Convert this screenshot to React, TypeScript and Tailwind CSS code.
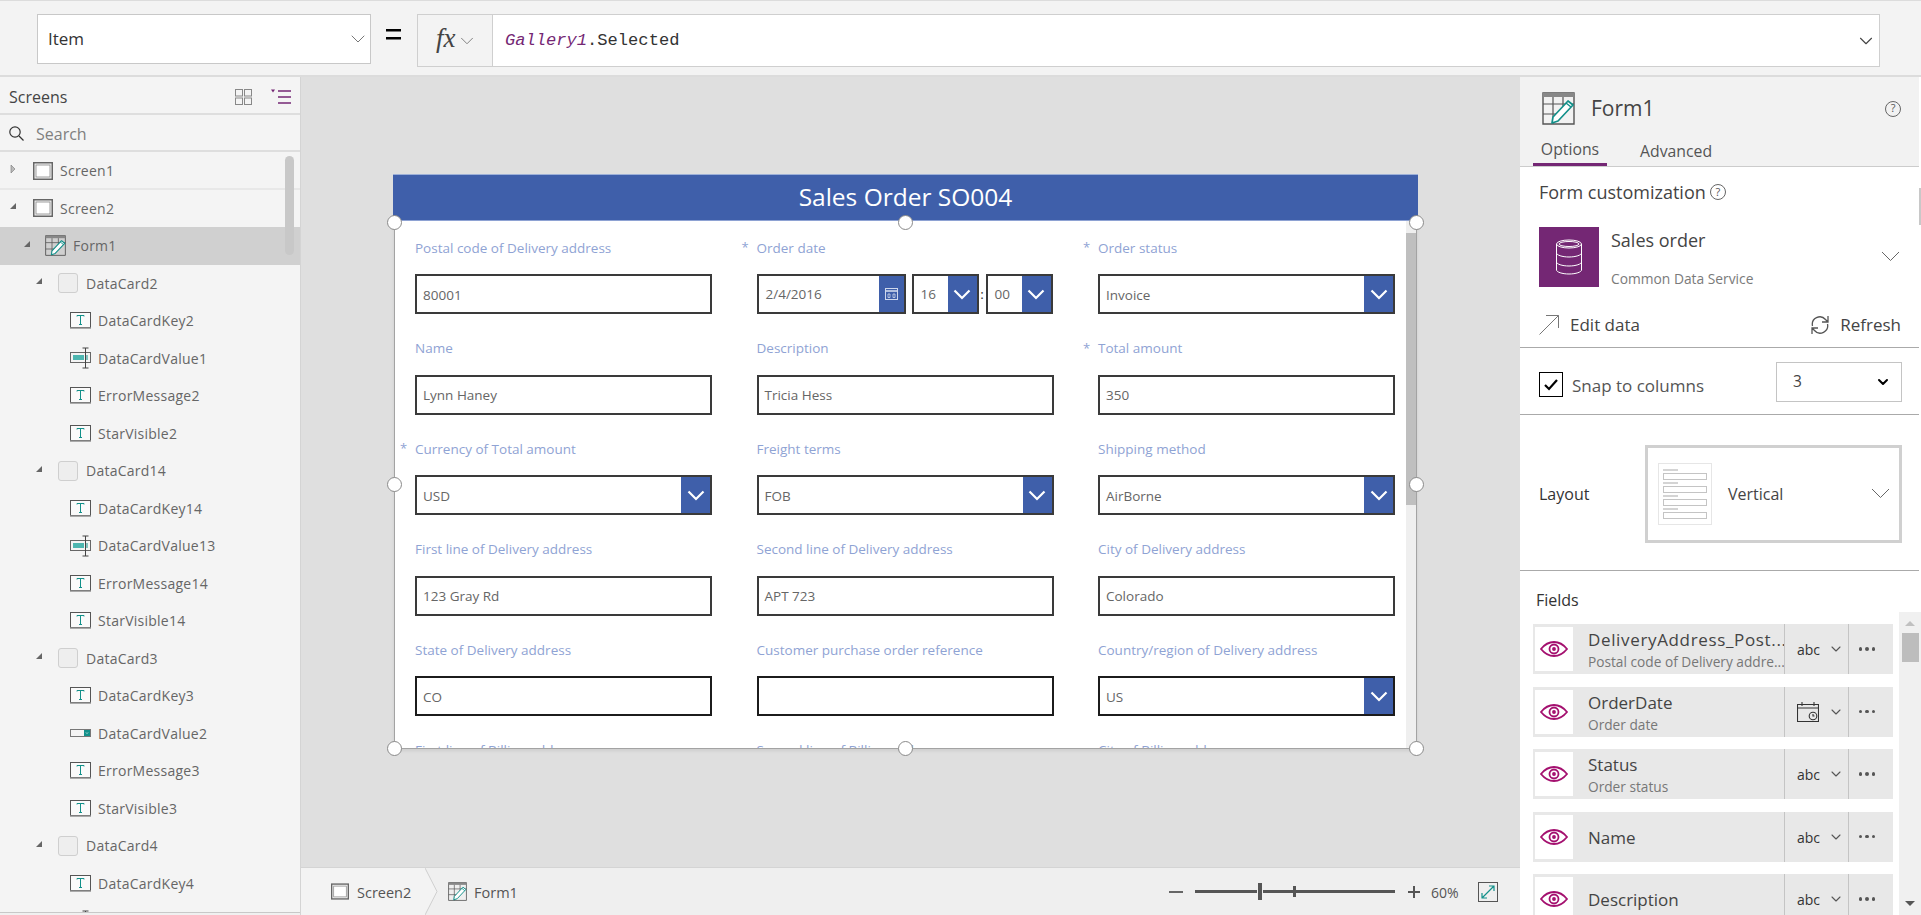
import { ChevronDown } from "lucide-react";

const sans = "font-['Open_Sans','Noto_Sans',sans-serif]";

type TreeKind = "screen" | "form" | "card" | "text" | "input" | "select";
type TreeItem = { name: string; kind: TreeKind; open?: boolean; selected?: boolean };

const tree: TreeItem[] = [
  { name: "Screen1", kind: "screen", open: false },
  { name: "Screen2", kind: "screen", open: true },
  { name: "Form1", kind: "form", open: true, selected: true },
  { name: "DataCard2", kind: "card", open: true },
  { name: "DataCardKey2", kind: "text" },
  { name: "DataCardValue1", kind: "input" },
  { name: "ErrorMessage2", kind: "text" },
  { name: "StarVisible2", kind: "text" },
  { name: "DataCard14", kind: "card", open: true },
  { name: "DataCardKey14", kind: "text" },
  { name: "DataCardValue13", kind: "input" },
  { name: "ErrorMessage14", kind: "text" },
  { name: "StarVisible14", kind: "text" },
  { name: "DataCard3", kind: "card", open: true },
  { name: "DataCardKey3", kind: "text" },
  { name: "DataCardValue2", kind: "select" },
  { name: "ErrorMessage3", kind: "text" },
  { name: "StarVisible3", kind: "text" },
  { name: "DataCard4", kind: "card", open: true },
  { name: "DataCardKey4", kind: "text" },
  { name: "DataCardValue3", kind: "input" },
];

type FieldCell = { label: string; value?: string; star?: boolean; type?: "text" | "select" | "date"; dark?: boolean };

const cells: FieldCell[] = [
  { label: "Postal code of Delivery address", value: "80001" },
  { label: "Order date", star: true, type: "date" },
  { label: "Order status", value: "Invoice", star: true, type: "select" },
  { label: "Name", value: "Lynn Haney" },
  { label: "Description", value: "Tricia Hess" },
  { label: "Total amount", value: "350", star: true },
  { label: "Currency of Total amount", value: "USD", star: true, type: "select" },
  { label: "Freight terms", value: "FOB", type: "select" },
  { label: "Shipping method", value: "AirBorne", type: "select" },
  { label: "First line of Delivery address", value: "123 Gray Rd" },
  { label: "Second line of Delivery address", value: "APT 723" },
  { label: "City of Delivery address", value: "Colorado" },
  { label: "State of Delivery address", value: "CO", dark: true },
  { label: "Customer purchase order reference", value: "", dark: true },
  { label: "Country/region of Delivery address", value: "US", type: "select", dark: true },
  { label: "First line of Billing address", value: "" },
  { label: "Second line of Billing address", value: "" },
  { label: "City of Billing address", value: "" },
];

const fields = [
  { name: "DeliveryAddress_Post...", sub: "Postal code of Delivery addre...", wide: true },
  { name: "OrderDate", sub: "Order date", date: true },
  { name: "Status", sub: "Order status" },
  { name: "Name" },
  { name: "Description" },
];

function FormEditIcon({ className }: { className: string }) {
  return (
    <svg viewBox="0 0 33 33" className={className} fill="none">
      <path d="M1 1h31v31H1z" stroke="#555" strokeWidth="1.4" />
      <path d="M1 1h31v4H1z" fill="#888" />
      <path d="M1 12h31M1 22h16M11 5v27M21 5v12" stroke="#555" strokeWidth="1.2" />
      <path d="M11 25 L26 9 L31 13 L16 29 L10 31 Z" fill="#fff" stroke="#12908a" strokeWidth="1.7" strokeLinejoin="round" />
      <path d="M24 11l5 4" stroke="#12908a" strokeWidth="1.4" />
    </svg>
  );
}

function ScreenIcon({ className }: { className: string }) {
  return (
    <svg viewBox="0 0 20 18" className={className} fill="none">
      <rect x="0.75" y="0.75" width="18.5" height="16.5" stroke="#666" strokeWidth="1.5" />
      <rect x="3" y="3" width="14" height="12" fill="#fff" stroke="#888" strokeWidth="0.8" />
    </svg>
  );
}

function TextIcon() {
  return (
    <svg viewBox="0 0 21 17" className="w-[21px] h-[17px]" fill="none">
      <rect x="0.5" y="0.5" width="20" height="15" fill="#fafafa" stroke="#555" />
      <path d="M0 16.25h21" stroke="#aaa" strokeWidth="1.5" />
      <path d="M7 4.5V3.5h7v1M10.5 3.5v9M9 12.5h3" stroke="#12908a" strokeWidth="1" />
    </svg>
  );
}

function InputIcon() {
  return (
    <svg viewBox="0 0 21 22" className="w-[21px] h-[22px]" fill="none">
      <rect x="0.5" y="5.5" width="20" height="10" fill="#f4f4f4" stroke="#666" />
      <rect x="3" y="8" width="11" height="5" fill="#4db6b0" />
      <path d="M17 8v5" stroke="#12908a" />
      <path d="M12.5 1h6M15.5 1v20M12.5 21h6" stroke="#444" />
    </svg>
  );
}

function SelectIcon() {
  return (
    <svg viewBox="0 0 21 8" className="w-[21px] h-[8px]" fill="none">
      <rect x="0.5" y="0.5" width="20" height="7" fill="#f4f4f4" stroke="#777" />
      <rect x="14" y="1" width="6" height="6" fill="#12908a" />
      <path d="M16 3.5l1 1 1-1" stroke="#fff" strokeWidth="0.7" />
    </svg>
  );
}

function Caret({ open }: { open?: boolean }) {
  if (open) {
    return (
      <svg viewBox="0 0 8 8" className="w-2 h-2 -mt-1">
        <path d="M7 1v6H1z" fill="#666" />
      </svg>
    );
  }
  return (
    <svg viewBox="0 0 8 10" className="w-2 h-[10px] -mt-1">
      <path d="M2 1l4 4-4 4z" fill="#bbb" stroke="#777" strokeWidth="0.6" />
    </svg>
  );
}

function TreeRow({ item }: { item: TreeItem }) {
  const isLeaf = item.kind === "text" || item.kind === "input" || item.kind === "select";
  const pad = isLeaf ? "pl-[70px]" : item.kind === "card" ? "pl-[35px]" : item.kind === "form" ? "pl-[23px]" : "pl-[9px]";
  return (
    <div className={`flex items-center h-[37.5px] shrink-0 ${pad} ${item.selected ? "bg-[#d0d0d0]" : ""}`}>
      {!isLeaf && (
        <span className={`flex items-center ${item.kind === "screen" ? "w-6" : item.kind === "form" ? "w-[22px]" : "w-[23px]"}`}>
          <Caret open={item.open} />
        </span>
      )}
      <span className={`flex items-center ${item.kind === "screen" ? "w-[27px]" : "w-[28px]"}`}>
        {item.kind === "screen" && <ScreenIcon className="w-5 h-[18px]" />}
        {item.kind === "form" && <FormEditIcon className="w-[21px] h-[21px]" />}
        {item.kind === "card" && <span className="w-[20px] h-[20px] rounded-[3px] bg-[#eeeeee] border border-[#cfcfcf]" />}
        {item.kind === "text" && <TextIcon />}
        {item.kind === "input" && <InputIcon />}
        {item.kind === "select" && <SelectIcon />}
      </span>
      <span className="text-[14px] text-[#666666] tracking-[0.25px]">{item.name}</span>
    </div>
  );
}

function Sidebar() {
  return (
    <aside className="relative w-[300px] shrink-0 bg-[#f4f4f4] flex flex-col overflow-hidden">
      <div className="flex items-center h-[38px] shrink-0 pl-[9px] pt-[3px] border-b-2 border-[#dedede]">
        <span className="text-[16px] text-[#444444]">Screens</span>
        <svg viewBox="0 0 17 16" className="w-[17px] h-4 ml-auto" fill="none" stroke="#888">
          <rect x="0.5" y="0.5" width="7" height="6.5" />
          <rect x="9.5" y="0.5" width="7" height="6.5" />
          <rect x="0.5" y="9" width="7" height="6.5" />
          <rect x="9.5" y="9" width="7" height="6.5" />
        </svg>
        <svg viewBox="0 0 20 15" className="w-5 h-[15px] ml-[19px] mr-[9px]" fill="none" stroke="#742774" strokeWidth="1.4">
          <path d="M7 2h13M7 8h13M7 14h13" />
          <path d="M0 0.5h4L2 3.5z" fill="#742774" stroke="none" />
        </svg>
      </div>
      <div className="flex items-center h-[37px] shrink-0 pl-[9px] pt-[2px] border-b-2 border-[#dedede]">
        <svg viewBox="0 0 15 15" className="w-[15px] h-[15px] mr-3" fill="none" stroke="#333" strokeWidth="1.2">
          <circle cx="6" cy="6" r="5.2" />
          <path d="M10 10l4.5 4.5" />
        </svg>
        <span className="text-[16px] text-[#808080]">Search</span>
      </div>
      <div className="flex flex-col flex-1 min-h-0 overflow-hidden">
        {tree.map((item, i) => (
          <div key={item.name} className={i === 1 ? "border-t-2 border-[#e8e8e8] -mt-[2px]" : ""}>
            <TreeRow item={item} />
          </div>
        ))}
      </div>
      <div className="absolute left-[285px] top-[79px] w-[9px] h-[99px] rounded-[5px] bg-[#c8c8c8]" />
      <div className="absolute left-0 right-0 bottom-0 h-[3px] bg-[#f0f0f0] border-t border-[#c8c8c8]" />
    </aside>
  );
}

function BlueChevron({ className }: { className: string }) {
  return (
    <span className={`flex items-center justify-center bg-[#3f5faa] ${className}`}>
      <svg viewBox="0 0 18 11" className="w-[18px] h-[11px]" fill="none" stroke="#fff" strokeWidth="2.2">
        <path d="M1.5 1.5L9 9l7.5-7.5" />
      </svg>
    </span>
  );
}

function DateField() {
  return (
    <div className="flex items-center h-10 text-[13.5px] text-[#666666]">
      <div className="flex w-[149px] h-full border-2 border-[#3a3a3a]">
        <span className="flex-1 flex items-center pl-[7px]">2/4/2016</span>
        <span className="w-[25px] flex items-center justify-center bg-[#3f5faa]">
          <svg viewBox="0 0 13 12" className="w-[13px] h-3" fill="none" stroke="#cfd8ec">
            <rect x="0.5" y="0.5" width="12" height="11" />
            <path d="M0.5 3h12" strokeWidth="1.6" />
            <path d="M3 6h2v3.5H3zM8 6h2v3.5H8z" strokeWidth="0.8" />
          </svg>
        </span>
      </div>
      <div className="flex w-[67px] h-full ml-[6px] border-2 border-[#3a3a3a]">
        <span className="flex-1 flex items-center pl-[7px]">16</span>
        <BlueChevron className="w-[29px]" />
      </div>
      <span className="w-[7px] text-center text-[#333333]">:</span>
      <div className="flex w-[67px] h-full border-2 border-[#3a3a3a]">
        <span className="flex-1 flex items-center pl-[7px]">00</span>
        <BlueChevron className="w-[29px]" />
      </div>
    </div>
  );
}

function FormCell({ cell }: { cell: FieldCell }) {
  const border = cell.dark ? "border-[#1c1c1c]" : "border-[#3a3a3a]";
  return (
    <div className="pt-3 h-[100.5px]">
      <div className="relative h-5 mb-4 flex items-center text-[13.5px] text-[#8fa3d4]">
        {cell.star && <span className="absolute -left-[15px] top-0 text-[13px]">*</span>}
        {cell.label}
      </div>
      {cell.type === "date" ? (
        <DateField />
      ) : (
        <div className={`flex h-10 border-2 ${border} bg-white text-[13.5px] text-[#666666]`}>
          <span className={`flex-1 flex items-center pl-[6px] ${cell.type === "select" ? "pt-[3px]" : "pt-[2px]"}`}>{cell.value}</span>
          {cell.type === "select" && <BlueChevron className="w-[29px]" />}
        </div>
      )}
    </div>
  );
}

function Handle({ className }: { className: string }) {
  return <span className={`absolute w-[15px] h-[15px] rounded-full bg-white border border-[#8a8a8a] ${className}`} />;
}

function FormCanvas() {
  return (
    <div className="flex-1 min-h-0 bg-[#dfdfdf] pt-[97px] pl-[92px]">
      <div className="relative w-[1025px]">
        <div className="h-[47px] flex items-center justify-center bg-[#3f5faa] border-t border-[#9db0d8] border-b border-b-[#8fa3d4] text-[24.5px] text-white">
          Sales Order SO004
        </div>
        <div className="flex h-[528px] mx-px bg-white border-x border-b border-[#a3a3a3] overflow-hidden shadow-[0_2px_3px_rgba(0,0,0,0.08)]">
          <div className="flex-1 pt-[5px] pl-[20px] overflow-hidden">
            <div className="grid grid-cols-[297px_297px_297px] gap-x-[44.5px]">
              {cells.map((cell) => (
                <FormCell key={cell.label} cell={cell} />
              ))}
            </div>
          </div>
          <div className="w-[10px] shrink-0 bg-[#efefef] pt-3">
            <div className="h-[272px] bg-[#bfbfbf]" />
          </div>
        </div>
        <Handle className="-left-[6px] top-[41px]" />
        <Handle className="left-[505px] top-[41px]" />
        <Handle className="-right-[6px] top-[41px]" />
        <Handle className="-left-[6px] top-[303px]" />
        <Handle className="-right-[6px] top-[303px]" />
        <Handle className="-left-[6px] top-[567px]" />
        <Handle className="left-[505px] top-[567px]" />
        <Handle className="-right-[6px] top-[567px]" />
      </div>
    </div>
  );
}

function StatusBar() {
  return (
    <div className="flex items-center h-[48px] shrink-0 bg-[#efefef] border-t border-[#d4d4d4] text-[#555555]">
      <div className="flex items-center h-full">
        <div className="flex items-center h-full w-[124px] pl-[30px] bg-[#f3f3f3]">
          <ScreenIcon className="w-[18px] h-[17px]" />
          <span className="ml-2 pt-[2px] text-[14.5px]">Screen2</span>
        </div>
        <svg viewBox="0 0 13 47" className="w-[13px] h-full" fill="none">
          <path d="M0 0L0 47L12 23.5z" fill="#f3f3f3" />
          <path d="M0 0l12 23.5L0 47" stroke="#cfcfcf" />
        </svg>
        <FormEditIcon className="w-[19px] h-[19px] ml-[10px]" />
        <span className="ml-[7px] pt-[2px] text-[14.5px]">Form1</span>
      </div>
      <div className="flex items-center ml-auto pr-[22px]">
        <span className="w-[14px] h-[2px] bg-[#666666]" />
        <div className="relative w-[200px] h-[3px] ml-3 bg-[#555555]">
          <span className="absolute left-[62px] -top-[7px] w-1 h-[17px] bg-[#555555] border-x border-[#efefef] box-content" />
          <span className="absolute left-[98px] -top-[4px] w-[3px] h-[11px] bg-[#555555]" />
        </div>
        <svg viewBox="0 0 12 12" className="w-3 h-3 ml-[13px]" stroke="#555" strokeWidth="2">
          <path d="M6 0v12M0 6h12" />
        </svg>
        <span className="w-[45px] ml-[11px] mr-[2px] pt-[2px] text-[14px]">60%</span>
        <svg viewBox="0 0 20 20" className="w-5 h-5" fill="none">
          <rect x="0.5" y="0.5" width="19" height="19" stroke="#555" />
          <path d="M4 16L16 4M11 4h5v5M4 11v5h5" stroke="#12908a" strokeWidth="1.2" />
        </svg>
      </div>
    </div>
  );
}

function HelpIcon({ className }: { className: string }) {
  return (
    <span className={`flex items-center justify-center rounded-full border border-[#666666] text-[#555555] ${className}`}>?</span>
  );
}

function Eye() {
  return (
    <svg viewBox="0 0 28 16" className="w-7 h-4" fill="none" stroke="#a4106f" strokeWidth="1.8">
      <path d="M1 8C5 3 9 1 14 1s9 2 13 7c-4 5-8 7-13 7S5 13 1 8z" />
      <circle cx="14" cy="8" r="4.5" />
      <circle cx="14" cy="8" r="1" fill="#a4106f" />
    </svg>
  );
}

function FieldRow({ field }: { field: (typeof fields)[number] }) {
  return (
    <div className="flex h-[50px] shrink-0 bg-[#e8e8e8] mb-[12.5px]">
      <div className="flex items-center justify-center w-[38px] my-[3px] ml-[2px] bg-white">
        <Eye />
      </div>
      <div className="flex flex-col justify-center w-[211px] pl-[15px] pt-[2px] overflow-hidden whitespace-nowrap">
        <div className={`text-[17px] leading-[22px] text-[#444444] ${field.wide ? "tracking-[0.65px]" : ""}`}>{field.name}</div>
        {field.sub && <div className="pt-[2px] text-[13.7px] leading-[18px] text-[#777777]">{field.sub}</div>}
      </div>
      <div className="flex items-center w-[64px] pl-[12px] border-l border-[#c4c4c4]">
        {field.date ? (
          <svg viewBox="0 0 22 21" className="w-[22px] h-[21px]" fill="none" stroke="#333" strokeWidth="1.1">
            <path d="M0.5 3.5h21v17h-21zM0.5 7h21M5 1v4M17 1v4" />
            <circle cx="16" cy="15" r="3.8" fill="#e8e8e8" />
            <path d="M16 13v2h1.5" />
          </svg>
        ) : (
          <span className="w-[22px] pt-px text-[14px] font-medium text-[#333333]">abc</span>
        )}
        <ChevronDown className="w-[16px] h-[16px] ml-[9px] text-[#555555]" strokeWidth={1.6} />
      </div>
      <div className="flex items-center justify-center gap-[3px] w-[44px] pr-[7px] border-l border-[#c4c4c4]">
        <span className="w-[3.5px] h-[3.5px] rounded-full bg-[#555555]" />
        <span className="w-[3.5px] h-[3.5px] rounded-full bg-[#555555]" />
        <span className="w-[3.5px] h-[3.5px] rounded-full bg-[#555555]" />
      </div>
    </div>
  );
}

function RightPanel() {
  return (
    <aside className="relative w-[401px] shrink-0 flex flex-col bg-white overflow-hidden">
      <div className="h-[90px] shrink-0 bg-[#f2f2f2] border-b border-[#cccccc] mr-[2px] relative">
        <div className="flex items-center pt-[15px] pl-[22px]">
          <FormEditIcon className="w-[33px] h-[33px]" />
          <span className="ml-4 text-[21px] text-[#444444]">Form1</span>
          <HelpIcon className="ml-auto mr-[18px] w-4 h-4 text-[11px]" />
        </div>
        <div className="absolute left-[13px] bottom-0 flex">
          <div className="w-[74px] h-[33px] flex items-center justify-center pt-[4px] border-b-[3px] border-[#742774] text-[15.8px] text-[#555555]">Options</div>
          <div className="ml-[33px] h-[33px] flex items-center pt-[5px] text-[15.8px] text-[#555555]">Advanced</div>
        </div>
      </div>
      <div className="h-[181px] shrink-0 mr-[2px] border-b border-[#aaaaaa] pl-[19px] pr-[18px]">
        <div className="flex items-center h-[50px]">
          <span className="text-[18px] text-[#444444]">Form customization</span>
          <HelpIcon className="ml-1 w-4 h-4 text-[11px]" />
        </div>
        <div className="flex h-[60px] mt-[10px]">
          <span className="flex items-center justify-center w-[60px] bg-[#742774]">
            <svg viewBox="0 0 26 36" className="w-[26px] h-9" fill="none" stroke="#fff" strokeWidth="1">
              <ellipse cx="13" cy="5" rx="12.5" ry="4" />
              <ellipse cx="13" cy="5" rx="10" ry="2.5" />
              <path d="M0.5 5v26c0 2 5.5 4 12.5 4s12.5-2 12.5-4V5M0.5 14c0 2 5.5 4 12.5 4s12.5-2 12.5-4M0.5 23c0 2 5.5 4 12.5 4s12.5-2 12.5-4" />
            </svg>
          </span>
          <div className="flex flex-col ml-3 whitespace-nowrap">
            <span className="h-[28px] flex items-center text-[18px] text-[#444444]">Sales order</span>
            <span className="mt-[15px] h-[21px] flex items-center text-[13.8px] text-[#7a7a7a]">Common Data Service</span>
          </div>
          <svg viewBox="0 0 19 11" className="w-[19px] h-[11px] ml-auto mt-[24px] mr-[1px]" fill="none" stroke="#666">
            <path d="M1 1l8.5 8.5L18 1" />
          </svg>
        </div>
        <div className="flex items-center h-[22px] mt-[27px]">
          <svg viewBox="0 0 20 20" className="w-5 h-5" fill="none" stroke="#777">
            <path d="M0.5 19.5L19.5 0.5M7 0.5h12.5V13" />
          </svg>
          <span className="ml-[11px] text-[17px] text-[#444444]">Edit data</span>
          <svg viewBox="0 0 20 20" className="w-5 h-5 ml-auto" fill="none" stroke="#555" strokeWidth="1.3">
            <path d="M2.5 11a7.5 7.5 0 0 1 13-6.5l2 2M17.5 9a7.5 7.5 0 0 1-13 6.5l-2-2M18 1v6h-6M2 19v-6h6" />
          </svg>
          <span className="ml-[10px] text-[17px] text-[#444444]">Refresh</span>
        </div>
      </div>
      <div className="flex items-start h-[67px] shrink-0 mr-[2px] border-b border-[#aaaaaa] pl-[19px] pr-[17px]">
        <span className="flex items-center justify-center w-[24px] h-[25px] mt-[24px] border border-black text-black">
          <svg viewBox="0 0 14 12" className="w-[14px] h-3" fill="none" stroke="#000" strokeWidth="2.2">
            <path d="M1 6l4 4 8-9" />
          </svg>
        </span>
        <span className="ml-[9px] mt-[25px] text-[17px] leading-[26px] text-[#555555]">Snap to columns</span>
        <div className="flex items-center ml-auto w-[126px] h-[40px] mt-[14px] pl-[16px] pr-[10px] border border-[#c4c4c4] text-[15.5px] text-[#444444]">
          3
          <ChevronDown className="w-4 h-4 ml-auto text-black" strokeWidth={3} />
        </div>
      </div>
      <div className="flex items-center h-[156px] shrink-0 mr-[2px] pt-[2px] border-b border-[#aaaaaa] pl-[19px]">
        <span className="w-[106px] shrink-0 text-[16px] text-[#333333]">Layout</span>
        <div className="flex items-center shrink-0 w-[257px] h-[98px] border-[3px] border-[#d0d0d0] pl-[10px]">
          <div className="flex flex-col justify-center w-[54px] h-[62px] px-[4px] border border-[#e6e6e6] gap-[2px]">
            {[0, 1, 2, 3].map((n) => (
              <div key={n}>
                <div className="w-[15px] h-[2px] bg-[#d4d4d4]" />
                <div className="h-[7px] mt-[2px] border border-[#c4c4c4]" />
              </div>
            ))}
          </div>
          <span className="ml-[16px] text-[16px] text-[#444444]">Vertical</span>
          <svg viewBox="0 0 19 11" className="w-[19px] h-[11px] ml-auto mr-[9px]" fill="none" stroke="#666">
            <path d="M1 1l8.5 8.5L18 1" />
          </svg>
        </div>
      </div>
      <div className="h-[41px] shrink-0 flex items-center pl-[16px] pt-[16px] text-[16px] text-[#333333]">Fields</div>
      <div className="flex flex-1 min-h-0 overflow-hidden pl-[13px]">
        <div className="w-[360px] shrink-0 pt-[12px]">
          {fields.map((field) => (
            <FieldRow key={field.name} field={field} />
          ))}
        </div>
        <div className="flex flex-col items-center w-[22px] ml-[6px] bg-[#f0f0f0]">
          <svg viewBox="0 0 10 5" className="w-[10px] h-[5px] mt-[9px]"><path d="M5 0l5 5H0z" fill="#c0c0c0" /></svg>
          <div className="w-[17px] h-[29px] mt-[7px] bg-[#bdbdbd]" />
          <svg viewBox="0 0 10 5" className="w-[10px] h-[5px] mt-auto mb-[9px]"><path d="M0 0h10L5 5z" fill="#555" /></svg>
        </div>
      </div>
      <div className="absolute right-0 top-[111px] w-[2px] h-[37px] bg-[#c8c8c8]" />
    </aside>
  );
}

export default function App() {
  return (
    <div className={`w-screen h-screen overflow-hidden flex flex-col bg-[#f3f3f3] ${sans}`}>
      <div className="flex h-[77px] shrink-0 pt-[13px] pl-[37px] pr-[41px] border-t-[1px] border-b-2 border-[#dcdcdc]">
        <div className="flex items-center w-[334px] h-[50px] pl-[10px] bg-white border border-[#c8c8c8] text-[17px] text-[#333333]">
          Item
          <ChevronDown className="w-6 h-6 ml-auto text-[#777777]" strokeWidth={1} />
        </div>
        <svg viewBox="0 0 15 11" className="w-[15px] h-[11px] ml-[15px] mt-[15px]" fill="#000">
          <path d="M0 0h15v2.5H0zM0 8h15v2.5H0z" />
        </svg>
        <div className="flex flex-1 h-[53px] ml-[16px] border border-[#cfcfcf]">
          <div className="flex items-center w-[75px] pl-[18px] border-r border-[#cfcfcf]">
            <span className="-mt-[4px] font-['Liberation_Serif',serif] italic text-[27px] text-[#444444]">fx</span>
            <ChevronDown className="w-[22px] h-[22px] ml-0 text-[#777777]" strokeWidth={1} />
          </div>
          <div className="flex items-center flex-1 pl-[12px] pr-[2px] bg-white font-['Liberation_Mono',monospace] text-[17.1px] text-[#333333]">
            <span className="italic text-[#742774]">Gallery1</span>.Selected
            <ChevronDown className="w-[22px] h-[22px] ml-auto text-[#444444]" strokeWidth={1.2} />
          </div>
        </div>
      </div>
      <div className="flex flex-1 min-h-0">
        <Sidebar />
        <main className="flex flex-col border-l border-[#d4d4d4] flex-1 min-w-0">
          <FormCanvas />
          <StatusBar />
        </main>
        <RightPanel />
      </div>
    </div>
  );
}
